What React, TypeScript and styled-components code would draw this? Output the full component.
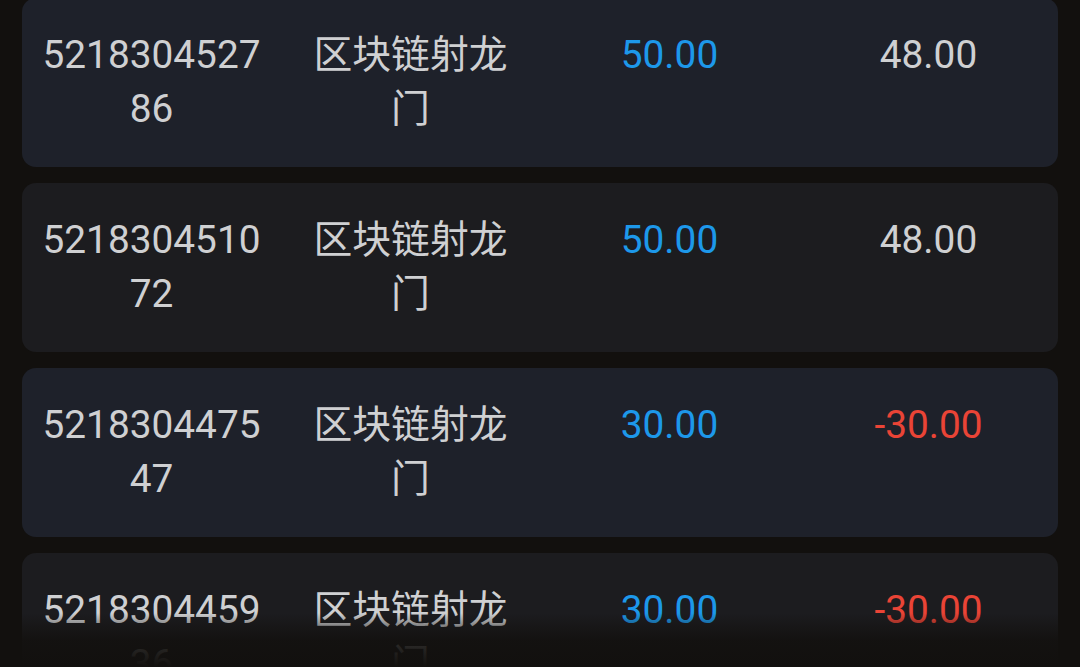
import React from "react";
import styled, { createGlobalStyle } from "styled-components";

const GlobalStyle = createGlobalStyle`
  html, body {
    margin: 0;
    padding: 0;
    background: #12100e;
    overflow: hidden;
  }
  body {
    font-family: Roboto, "Noto Sans CJK SC", sans-serif;
  }
`;

const Page = styled.div`
  position: relative;
  width: 1080px;
  height: 667px;
  overflow: hidden;
  background: #12100e;
`;

const List = styled.div`
  display: flex;
  flex-direction: column;
  gap: 16px;
  padding: 0 22px;
  margin-top: -2px;
`;

const Card = styled.div<{ $alt: boolean }>`
  display: grid;
  grid-template-columns: repeat(4, 1fr);
  min-height: 169px;
  box-sizing: border-box;
  padding: 30px 0 31px;
  border-radius: 14px;
  background: ${(p) => (p.$alt ? "#1c1c1f" : "#1e212a")};
`;

const Cell = styled.div<{ $tone?: "plain" | "blue" | "red" }>`
  padding: 0 16px;
  text-align: center;
  font-size: 38.8px;
  line-height: 54px;
  word-break: break-all;
  color: ${(p) =>
    p.$tone === "blue" ? "#1d98ea" : p.$tone === "red" ? "#ea4436" : "#cfd0d2"};
`;

const Fade = styled.div`
  position: absolute;
  left: 0;
  right: 0;
  bottom: 0;
  height: 54px;
  background: linear-gradient(
    to bottom,
    rgba(18, 16, 14, 0) 0%,
    rgba(18, 16, 14, 0.85) 50%,
    #12100e 100%
  );
  pointer-events: none;
`;

type Row = { id: string; name: string; amount: string; result: string };

const rows: Row[] = [
  { id: "521830452786", name: "区块链射龙门", amount: "50.00", result: "48.00" },
  { id: "521830451072", name: "区块链射龙门", amount: "50.00", result: "48.00" },
  { id: "521830447547", name: "区块链射龙门", amount: "30.00", result: "-30.00" },
  { id: "521830445936", name: "区块链射龙门", amount: "30.00", result: "-30.00" },
];

export default function App() {
  return (
    <Page>
      <GlobalStyle />
      <List>
        {rows.map((r, i) => (
          <Card key={r.id} $alt={i % 2 === 1}>
            <Cell>{r.id}</Cell>
            <Cell>{r.name}</Cell>
            <Cell $tone="blue">{r.amount}</Cell>
            <Cell $tone={r.result.startsWith("-") ? "red" : "plain"}>{r.result}</Cell>
          </Card>
        ))}
      </List>
      <Fade />
    </Page>
  );
}
